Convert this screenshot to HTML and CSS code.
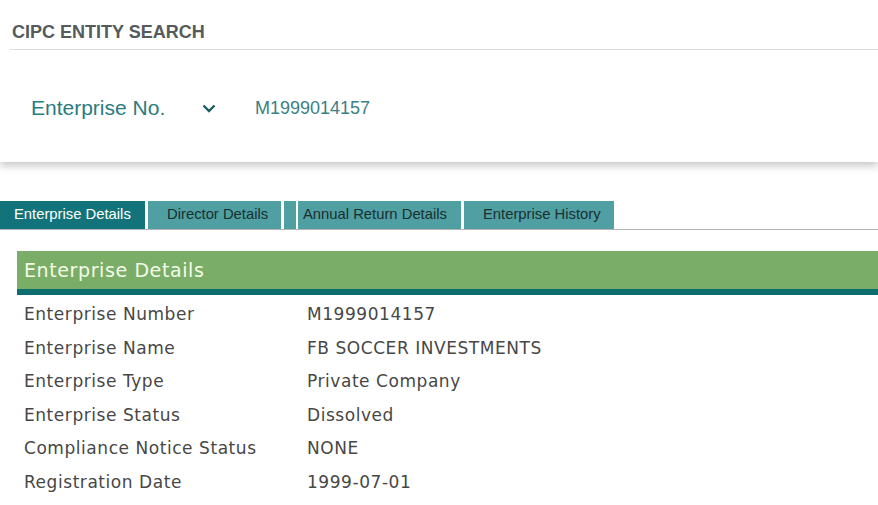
FILE: index.html
```html
<!DOCTYPE html>
<html>
<head>
<meta charset="utf-8">
<link rel="stylesheet" href="styles.css">
</head>
<body>
<div class="search-card">
  <div class="card-title">CIPC ENTITY SEARCH</div>
  <div class="search-row">
    <div class="select">
      <span class="select-label">Enterprise No.</span>
      <svg class="chev" width="14" height="9" viewBox="0 0 14 9"><path d="M1.5 1.5 L7 7 L12.5 1.5" fill="none" stroke="#1d5e62" stroke-width="2.4"/></svg>
    </div>
    <span class="search-value">M1999014157</span>
  </div>
</div>

<div class="tabs">
  <div class="tab tab-active tab-w1">Enterprise Details</div>
  <div class="tab tab-w2">Director Details</div>
  <div class="tab tab-w3 tab-split">Annual Return Details</div>
  <div class="tab tab-w4">Enterprise History</div>
</div>

<div class="panel">
  <div class="panel-head">Enterprise Details</div>
  <div class="rows">
    <div class="row"><span class="lbl">Enterprise Number</span><span class="val">M1999014157</span></div>
    <div class="row"><span class="lbl">Enterprise Name</span><span class="val">FB SOCCER INVESTMENTS</span></div>
    <div class="row"><span class="lbl">Enterprise Type</span><span class="val">Private Company</span></div>
    <div class="row"><span class="lbl">Enterprise Status</span><span class="val">Dissolved</span></div>
    <div class="row"><span class="lbl">Compliance Notice Status</span><span class="val">NONE</span></div>
    <div class="row"><span class="lbl">Registration Date</span><span class="val">1999-07-01</span></div>
  </div>
</div>
</body>
</html>
```

FILE: styles.css
```css
html, body {
  margin: 0;
  padding: 0;
  background: #ffffff;
  overflow: hidden;
}
body {
  width: 878px;
  height: 505px;
  font-family: "Liberation Sans", Arial, sans-serif;
}
.search-card {
  height: 162px;
  background: #fff;
  box-shadow: 0 4px 8px rgba(0, 0, 0, 0.22);
  box-sizing: border-box;
  padding-left: 10px;
}
.card-title {
  height: 50px;
  box-sizing: border-box;
  border-bottom: 1px solid #dcdcdc;
  padding: 22px 0 0 2px;
  font-weight: bold;
  font-size: 18px;
  line-height: 20px;
  color: #555a5c;
}
.search-row {
  display: flex;
  align-items: center;
  height: 112px;
  padding-top: 2px;
  padding-left: 21px;
}
.select {
  display: flex;
  align-items: center;
  width: 224px;
}
.select-label {
  font-size: 21px;
  color: #2a7b7e;
  width: 171px;
}
.chev {
  display: block;
}
.search-value {
  font-size: 18px;
  color: #3a7f84;
}
.tabs {
  display: flex;
  gap: 3px;
  margin-top: 39px;
  height: 28px;
  border-bottom: 1px solid #b4b4b4;
}
.tab {
  box-sizing: border-box;
  height: 28px;
  background: #4f9fa3;
  color: #19302f;
  font-size: 14.8px;
  line-height: 27px;
  padding-left: 19px;
  white-space: nowrap;
}
.tab-active {
  background: #13737a;
  color: #ffffff;
  padding-left: 14px;
}
.tab-w1 { width: 145px; }
.tab-w2 { width: 133px; }
.tab-w3 { width: 177px; }
.tab-w4 { width: 150px; }
.tab-split {
  background: linear-gradient(to right, #4f9fa3 12px, #ffffff 12px, #ffffff 14px, #4f9fa3 14px);
}
.panel {
  margin: 21px 0 0 17px;
}
.panel-head {
  height: 38px;
  background: #7aad67;
  border-bottom: 6px solid #0e6e6e;
  color: #f4fbe8;
  font-family: "DejaVu Sans", Verdana, sans-serif;
  font-size: 19px;
  letter-spacing: 0.6px;
  line-height: 39px;
  padding-left: 7px;
}
.rows {
  padding: 3px 0 0 7px;
}
.row {
  display: flex;
  height: 33.6px;
  line-height: 33.6px;
  font-family: "DejaVu Sans", Verdana, sans-serif;
  font-size: 17px;
  letter-spacing: 0.55px;
  color: #474747;
}
.lbl {
  width: 283px;
  flex: none;
}
```
